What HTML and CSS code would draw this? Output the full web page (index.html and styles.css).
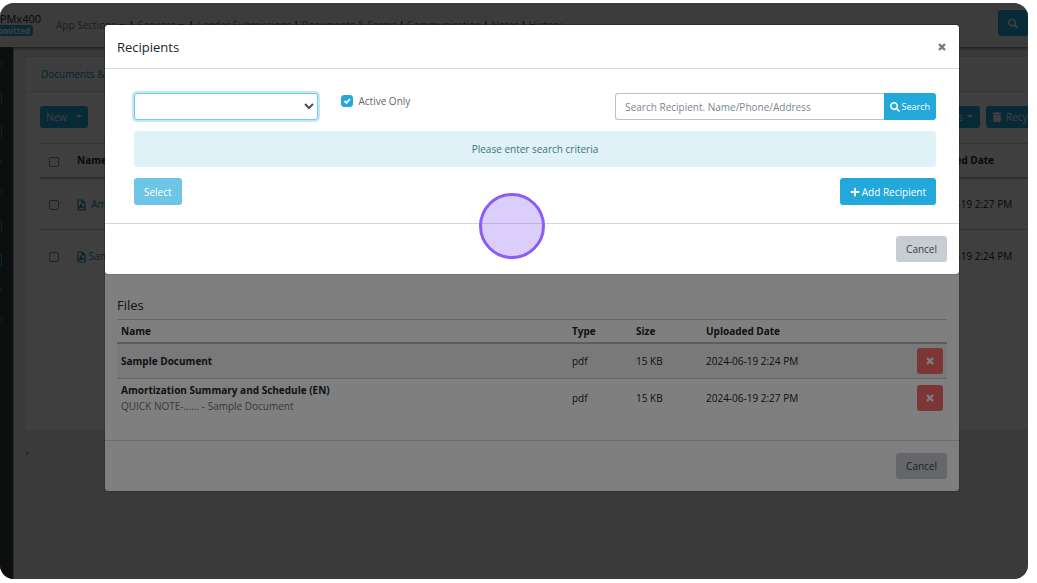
FILE: index.html
```
<!DOCTYPE html>
<html lang="en">
<head>
    <meta charset="UTF-8">
    <title>Recipients</title>
    <link rel="stylesheet" href="styles.css">
</head>
<body>
    <svg class="sprite" aria-hidden="true">
        <symbol id="i-search" viewBox="0 0 512 512"><path d="M505 442.7L405.3 343c-4.500-4.500-10.600-7-17-7H372c27.600-35.300 44-79.700 44-128C416 93.100 322.900 0 208 0S0 93.100 0 208s93.100 208 208 208c48.300 0 92.700-16.400 128-44v16.300c0 6.400 2.500 12.500 7 17l99.700 99.700c9.400 9.400 24.600 9.400 33.900 0l28.300-28.300c9.400-9.400 9.400-24.600.1-34zM208 336c-70.700 0-128-57.200-128-128 0-70.700 57.200-128 128-128 70.700 0 128 57.200 128 128 0 70.700-57.200 128-128 128z"/></symbol>
        <symbol id="i-plus" viewBox="0 0 448 512"><path d="M416 208H272V64c0-17.670-14.330-32-32-32h-32c-17.670 0-32 14.330-32 32v144H32c-17.670 0-32 14.330-32 32v32c0 17.670 14.330 32 32 32h144v144c0 17.670 14.330 32 32 32h32c17.670 0 32-14.330 32-32V304h144c17.670 0 32-14.330 32-32v-32c0-17.670-14.330-32-32-32z"/></symbol>
        <symbol id="i-times" viewBox="0 0 10 10"><path d="M2 2l6 6M8 2l-6 6" stroke="currentColor" stroke-width="2.400"/></symbol>
        <symbol id="i-trash" viewBox="0 0 448 512"><path d="M32 464a48 48 0 0 0 48 48h288a48 48 0 0 0 48-48V128H32zM432 32H312l-9-19A24 24 0 0 0 281 0H167a24 24 0 0 0-22 13L136 32H16A16 16 0 0 0 0 48v32a16 16 0 0 0 16 16h416a16 16 0 0 0 16-16V48a16 16 0 0 0-16-16z"/></symbol>
        <symbol id="i-pdf" viewBox="0 0 9 12"><path d="M1 1h4l3 3v7H1zM5 1v3h3M2 9c1-1 2-3 2-4 0 2 1 3 3 3-2 0-4 0-5 1" fill="none" stroke="currentColor" stroke-width="1.200" stroke-linejoin="round"/></symbol>
        <symbol id="i-caret" viewBox="0 0 6 4"><path d="M0 0h6L3 3z"/></symbol>
    </svg>
    <div class="screen">
        <header class="topbar">
            <div class="app-id">
                <span class="app-name">APMx400</span>
                <span class="badge">Submitted</span>
            </div>
            <nav class="nav">
                <a href="#">App Sections <svg class="caret"><use href="#i-caret"/></svg></a><b class="wide">|</b>
                <a href="#">Services <svg class="caret"><use href="#i-caret"/></svg></a><b class="wide">|</b>
                <a href="#">Lender Submissions</a><b>|</b>
                <a href="#">Documents &amp; Forms</a><b>|</b>
                <a href="#">Communication</a><b>|</b>
                <a href="#">Notes</a><b>|</b>
                <a href="#">History</a>
            </nav>
            <button class="btn btn-top" aria-label="Search"><svg class="icon icon-lg"><use href="#i-search"/></svg></button>
        </header>
        <div class="layout">
            <aside class="sidebar">
                <i class="dot"></i><i></i><i></i><i class="dot"></i><i class="dot"></i><i></i><i class="on"></i><i class="dot"></i><i class="dot"></i>
            </aside>
            <main class="main">
                <section class="card">
                    <div class="card-head"><a href="#">Documents &amp; Forms</a></div>
                    <div class="card-body">
                        <div class="toolbar">
                            <button class="btn btn-sm btn-new">New <svg class="caret"><use href="#i-caret"/></svg></button>
                            <button class="btn btn-sm push">Actions <svg class="caret"><use href="#i-caret"/></svg></button>
                            <button class="btn btn-sm btn-bin"><svg class="icon"><use href="#i-trash"/></svg> Recycle Bin</button>
                        </div>
                        <table class="docs">
                            <thead>
                                <tr><th class="c-check"><input type="checkbox" class="check" aria-label="Select all"></th><th>Name</th><th class="c-date">Uploaded Date</th></tr>
                            </thead>
                            <tbody>
                                <tr>
                                    <td><input type="checkbox" class="check" aria-label="Select Amortization Summary"></td>
                                    <td><a href="#"><svg class="icon-pdf"><use href="#i-pdf"/></svg>&nbsp; Amortization Summary</a></td>
                                    <td>2024-06-19 2:27 PM</td>
                                </tr>
                                <tr>
                                    <td><input type="checkbox" class="check" aria-label="Select Sample Document"></td>
                                    <td><a href="#"><svg class="icon-pdf"><use href="#i-pdf"/></svg> Sample Document</a></td>
                                    <td>2024-06-19 2:24 PM</td>
                                </tr>
                            </tbody>
                        </table>
                    </div>
                </section>
                <p class="foot-mark">'</p>
            </main>
        </div>

        <div class="backdrop">
            <div class="modal modal-files">
                <div class="files">
                    <h2 class="title">Files</h2>
                    <table class="file-table">
                        <thead>
                            <tr><th>Name</th><th class="c-type">Type</th><th class="c-size">Size</th><th class="c-up">Uploaded Date</th><th class="c-act"></th></tr>
                        </thead>
                        <tbody>
                            <tr>
                                <td><strong>Sample Document</strong></td>
                                <td>pdf</td>
                                <td>15 KB</td>
                                <td>2024-06-19 2:24 PM</td>
                                <td><button class="btn btn-danger" aria-label="Remove"><svg class="icon-x"><use href="#i-times"/></svg></button></td>
                            </tr>
                            <tr>
                                <td><strong>Amortization Summary and Schedule (EN)</strong><small>QUICK NOTE-...... - Sample Document</small></td>
                                <td>pdf</td>
                                <td>15 KB</td>
                                <td>2024-06-19 2:27 PM</td>
                                <td><button class="btn btn-danger" aria-label="Remove"><svg class="icon-x"><use href="#i-times"/></svg></button></td>
                            </tr>
                        </tbody>
                    </table>
                </div>
                <div class="modal-foot"><button class="btn btn-light">Cancel</button></div>
            </div>
        </div>

        <div class="backdrop">
            <div class="modal" role="dialog" aria-labelledby="dlg-title">
                <div class="modal-head">
                    <h2 class="title" id="dlg-title">Recipients</h2>
                    <button class="close" aria-label="Close"><svg class="icon-x"><use href="#i-times"/></svg></button>
                </div>
                <div class="modal-body">
                    <div class="filters">
                        <select class="select" aria-label="Recipient type"><option></option></select>
                        <label class="active-only"><input type="checkbox" class="check" checked> Active Only</label>
                        <div class="search">
                            <input type="text" placeholder="Search Recipient. Name/Phone/Address" aria-label="Search recipient">
                            <button class="btn btn-search"><svg class="icon"><use href="#i-search"/></svg> Search</button>
                        </div>
                    </div>
                    <div class="alert">Please enter search criteria</div>
                    <div class="actions">
                        <button class="btn btn-select" disabled>Select</button>
                        <button class="btn btn-add"><svg class="icon"><use href="#i-plus"/></svg> Add Recipient</button>
                    </div>
                </div>
                <div class="modal-foot"><button class="btn btn-light">Cancel</button></div>
            </div>
        </div>
        <div class="pointer"></div>
    </div>
</body>
</html>
```
FILE: styles.css
```
*{
    box-sizing: border-box;
}
body{
    margin:0;
    padding:3px 9px 4px 0;
    background: #fff;
    color:#212529;
    font:10px/16px "Open Sans", "Noto Sans", sans-serif;
}
button, input, select{
    font:inherit;
    margin:0;
}
a{
    color:#1a8ab5;
    text-decoration: none;
}
.sprite{
    display: none;
}
.screen{
    position: relative;
    height:calc(100vh - 7px);
    overflow: hidden;
    display: flex;
    flex-direction: column;
    background: #e8e8e8;
    border-radius: 14px;
}

/* top bar */
.topbar{
    display: flex;
    align-items: center;
    height:44px;
    background: #f1f1f1;
    box-shadow: 0 1px 3px #555;
    position: relative;
}
.app-id{
    width:41px;
    display: flex;
    flex-direction: column;
    align-items: flex-end;
    margin-bottom:2px;
    line-height: 12px;
}
.app-name{
    font-size:11px;
}
.badge{
    margin-right:8px;
    padding:0 3px;
    border-radius: 3px;
    background: #22a8da;
    color:#fff;
    font-size:8px;
    line-height: 11px;
    font-weight: bold;
}
.nav{
    margin-left:15px;
    white-space: nowrap;
}
.nav a{
    color:#777;
}
.nav b{
    margin-left:2px;
}
.nav .wide{
    margin:0 1px 0 4px;
}
.caret{
    width:6px;
    height:4px;
    fill:currentColor;
    vertical-align: middle;
}
.btn{
    display: inline-flex;
    align-items: center;
    justify-content: center;
    gap:4px;
    height:26px;
    padding:0 10px;
    border:0;
    border-radius: 3px;
    background: #22a8da;
    color:#fff;
    white-space: nowrap;
}
.icon{
    width:10px;
    height:10px;
    fill:currentColor;
}
.icon-lg{
    width:11px;
    height:11px;
}
.icon-x{
    width:10px;
    height:10px;
}
.btn-top{
    margin-left:auto;
    margin-bottom:4px;
    width:30px;
}

/* page under the dialogs */
.layout{
    flex:1;
    display: flex;
}
.sidebar{
    width:14px;
    padding-top:11px;
    background: #343a40;
    border-right:1px solid #aaa;
    overflow: hidden;
}
.sidebar i{
    display: block;
    width:2px;
    height:12px;
    margin-bottom:22px;
    border:1px solid #777;
    border-left:0;
    border-radius: 0 2px 2px 0;
}
.sidebar .dot{
    height:4px;
    margin:4px 0 26px;
}
.sidebar .on{
    border-color:#22a8da;
}
.main{
    flex:1;
    min-width:0;
    padding:9px 0 0 12px;
}
.card{
    margin-right:-52px;
    min-height:374px;
    background: #fff;
    border-top:1px solid #ddd;
    border-radius: 3px;
}
.card-head{
    padding:9px 15px;
    border-bottom:1px solid #ddd;
    background: #f8f8f8;
}
.card-body{
    padding:14px 14px 0;
}
.toolbar{
    display: flex;
    gap:6px;
    margin-bottom:15px;
}
.btn-sm{
    height:22px;
    padding:0 7px;
}
.btn-new{
    gap:9px;
    padding:0 6px;
}
.push{
    margin-left:auto;
}
.btn-bin{
    width:80px;
    padding:0 6px;
    justify-content: flex-start;
}
table{
    width:100%;
    border-collapse: collapse;
    table-layout: fixed;
}
th{
    text-align: left;
}
.docs th, .docs td{
    height:52px;
    padding:0;
    border-top:1px solid #ccc;
}
.docs th{
    height:34px;
    border-bottom:2px solid #bbb;
}
.docs .c-check{
    width:37px;
}
.docs .c-date{
    width:146px;
}
.docs .check{
    margin-left:9px;
}
.icon-pdf{
    width:9px;
    height:12px;
    vertical-align: middle;
}
.foot-mark{
    margin:18px 0 0;
}
.check{
    appearance: none;
    display: inline-block;
    width:10px;
    height:10px;
    border:1px solid #888;
    border-radius: 2px;
    vertical-align: middle;
}
.check:checked{
    width:12px;
    height:12px;
    border-color:#22a8da;
    border-radius: 3px;
    background: #22a8da url("data:image/svg+xml,%3Csvg xmlns='http://www.w3.org/2000/svg' viewBox='0 0 10 10'%3E%3Cpath d='M2.500 5l2 2 3.500-4' fill='none' stroke='white' stroke-width='1.800'/%3E%3C/svg%3E") center / contain no-repeat;
}

/* dialogs */
.backdrop{
    position: absolute;
    inset:0;
    padding:22px 69px 0 105px;
    background: rgba(0,0,0,.5);
}
.modal{
    background: #fff;
    border-radius: 3px;
    box-shadow: 0 0 1px #000;
}
.modal-files{
    padding-top:270px;
}
.title{
    margin:0;
    font-size:13px;
    line-height: 20px;
    font-weight: 500;
}
.modal-head{
    display: flex;
    justify-content: space-between;
    align-items: center;
    padding:12px 12px 11px;
    border-bottom:1px solid #d5d7da;
}
.close{
    display: flex;
    padding:0;
    border:0;
    background: none;
    color:#777;
}
.modal-body{
    padding:24px 23px 18px 29px;
}
.filters{
    display: flex;
    align-items: flex-start;
    margin-bottom:11px;
}
.select{
    width:23%;
    height:27px;
    border:1px solid #73cbea;
    border-radius: 3px;
    box-shadow: 0 0 0 2px #c3e7f5;
    background: #fff;
    color:#495057;
}
.active-only{
    display: flex;
    align-items: center;
    gap:5px;
    margin-left:23px;
    color:#666;
}
.search{
    display: flex;
    width:40%;
    margin-left:auto;
}
.search input{
    flex:1;
    min-width:0;
    height:27px;
    padding:0 9px;
    border:1px solid #b5c3d3;
    border-right:0;
    border-radius: 3px 0 0 3px;
    color:#495057;
}
.search input::placeholder{
    color:#7a8591;
    opacity:1;
}
.search .btn, .actions .btn{
    height:27px;
}
.btn-search{
    gap:2px;
    padding:0 6px;
    border-radius: 0 3px 3px 0;
    font-size:9px;
}
.alert{
    padding:10px;
    margin-bottom:11px;
    border-radius: 3px;
    background: #dff2f8;
    color:#41717c;
    text-align: center;
}
.actions{
    display: flex;
    justify-content: space-between;
}
.btn-select{
    background: #6ec6e6;
}
.btn-add{
    gap:2px;
}
.modal-foot{
    display: flex;
    justify-content: flex-end;
    padding:12px;
    border-top:1px solid #d5d7da;
}
.btn-light{
    background: #c8ccd3;
    color:#3a4047;
}

/* files table */
.files{
    padding:0 12px 23px;
}
.files .title{
    margin-bottom:4px;
}
.file-table th{
    height:23px;
    padding:0 4px;
    border-top:1px solid #ccc;
    border-bottom:2px solid #bbb;
}
.file-table td{
    height:36px;
    padding:3px 4px;
    border-top:1px solid #ccc;
}
.file-table tbody tr:first-child{
    background: #f2f2f2;
}
.file-table small{
    display: block;
    font-size:10px;
    color:#6c757d;
}
.file-table .btn{
    display: flex;
}
.c-type{
    width:64px;
}
.c-size{
    width:70px;
}
.c-up{
    width:211px;
}
.c-act{
    width:34px;
}
.btn-danger{
    width:26px;
    padding:0;
    background: #f86c6b;
}
.pointer{
    position: absolute;
    left:479px;
    top:190px;
    width:66px;
    height:66px;
    border:3px solid #8b5cf6;
    border-radius: 50%;
    background: rgba(139,92,246,.3);
}
```
